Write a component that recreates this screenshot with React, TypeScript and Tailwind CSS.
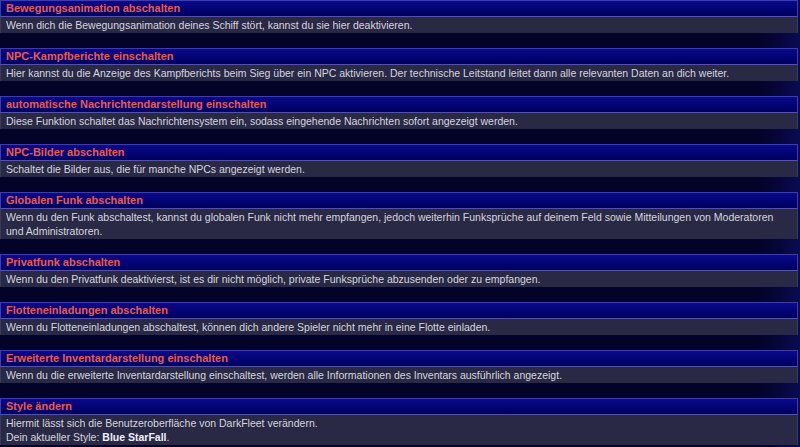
import React from "react";

type Option = {
  title: string;
  text: React.ReactNode;
};

const options: Option[] = [
  {
    title: "Bewegungsanimation abschalten",
    text: "Wenn dich die Bewegungsanimation deines Schiff stört, kannst du sie hier deaktivieren.",
  },
  {
    title: "NPC-Kampfberichte einschalten",
    text: "Hier kannst du die Anzeige des Kampfberichts beim Sieg über ein NPC aktivieren. Der technische Leitstand leitet dann alle relevanten Daten an dich weiter.",
  },
  {
    title: "automatische Nachrichtendarstellung einschalten",
    text: "Diese Funktion schaltet das Nachrichtensystem ein, sodass eingehende Nachrichten sofort angezeigt werden.",
  },
  {
    title: "NPC-Bilder abschalten",
    text: "Schaltet die Bilder aus, die für manche NPCs angezeigt werden.",
  },
  {
    title: "Globalen Funk abschalten",
    text: "Wenn du den Funk abschaltest, kannst du globalen Funk nicht mehr empfangen, jedoch weiterhin Funksprüche auf deinem Feld sowie Mitteilungen von Moderatoren und Administratoren.",
  },
  {
    title: "Privatfunk abschalten",
    text: "Wenn du den Privatfunk deaktivierst, ist es dir nicht möglich, private Funksprüche abzusenden oder zu empfangen.",
  },
  {
    title: "Flotteneinladungen abschalten",
    text: "Wenn du Flotteneinladungen abschaltest, können dich andere Spieler nicht mehr in eine Flotte einladen.",
  },
  {
    title: "Erweiterte Inventardarstellung einschalten",
    text: "Wenn du die erweiterte Inventardarstellung einschaltest, werden alle Informationen des Inventars ausführlich angezeigt.",
  },
  {
    title: "Style ändern",
    text: (
      <>
        Hiermit lässt sich die Benutzeroberfläche von DarkFleet verändern.
        <br />
        Dein aktueller Style: <b className="font-bold text-[#f0f0f8]">Blue StarFall</b>.
      </>
    ),
  },
];

const OptionBlock: React.FC<{ option: Option }> = ({ option }) => (
  <div className="mb-[15px] w-[798px]">
    <div className="h-[17px] border border-[#3c3cab] border-b-[#5252a8] bg-gradient-to-b from-[#0a0a8c] to-[#00005e] pl-[5px] text-[11px] font-bold leading-[15px] text-[#e65c50]">
      {option.title}
    </div>
    <div className="border-x border-[#3a3a5c] bg-[#292946] py-px pl-[5px] pr-[20px] text-[10.5px] leading-[14px] text-[#d6d6de]">
      {option.text}
    </div>
  </div>
);

export default function App() {
  return (
    <div
      className="h-[447px] w-[800px] overflow-hidden bg-gradient-to-r from-[#03032a] via-[#03032a] via-95% to-[#0b0b52]"
      style={{ fontFamily: '"Liberation Sans", Arial, sans-serif' }}
    >
      {options.map((o) => (
        <OptionBlock key={o.title} option={o} />
      ))}
    </div>
  );
}
